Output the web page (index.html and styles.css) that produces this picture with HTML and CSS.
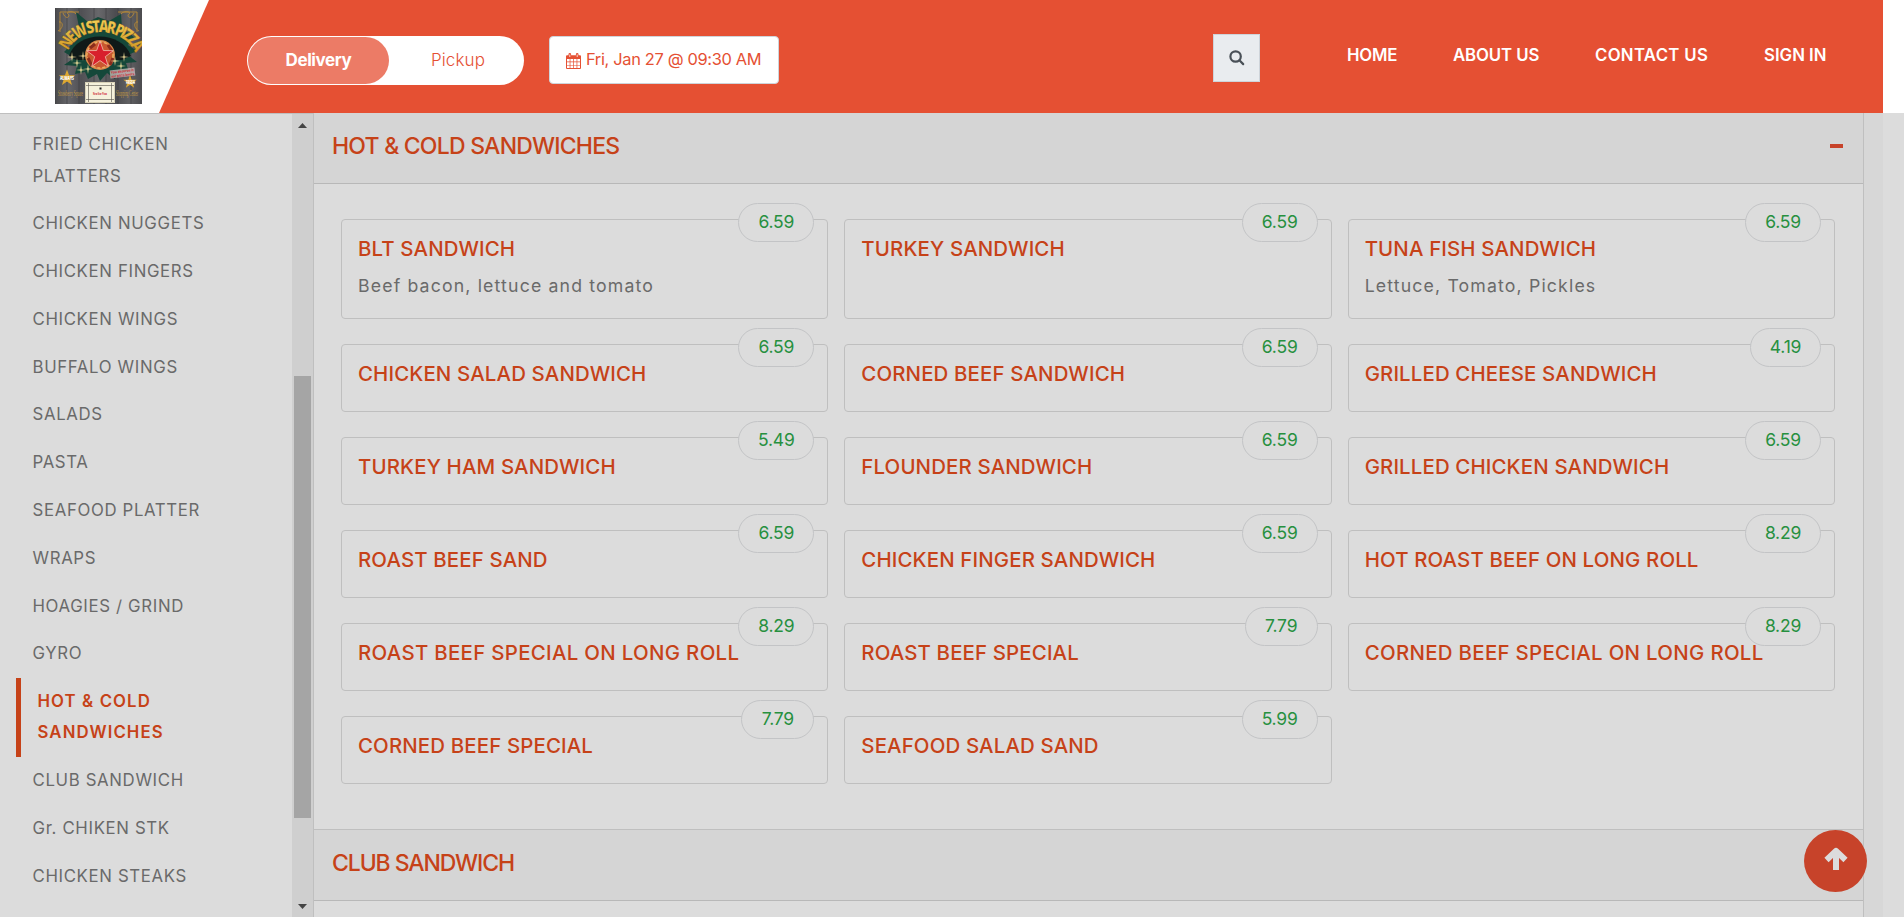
FILE: index.html
```html
<!DOCTYPE html>
<html lang="en">
<head>
<meta charset="utf-8">
<title>New Star Pizza - Menu</title>
<link rel="stylesheet" href="styles.css">
</head>
<body>
<header class="header">
  <div class="brand">
    <svg class="logo" width="87" height="96" viewBox="0 0 87 96">
      <defs>
        <linearGradient id="gold" x1="0" y1="0" x2="0" y2="1"><stop offset="0" stop-color="#f9d65c"/><stop offset="1" stop-color="#c98d1c"/></linearGradient>
        <linearGradient id="wood" x1="0" y1="0" x2="1" y2="0"><stop offset="0" stop-color="#4a4a4c"/><stop offset=".15" stop-color="#66666a"/><stop offset=".3" stop-color="#505054"/><stop offset=".5" stop-color="#68686b"/><stop offset=".7" stop-color="#4c4c50"/><stop offset=".85" stop-color="#616164"/><stop offset="1" stop-color="#4b4b4e"/></linearGradient>
        <path id="arch" d="M13 43C24 18 66 18 79 43"/>
        <path id="star" d="M0-10 2.4-3.2 9.5-3.1 3.8 1.2 5.9 8.1 0 4-5.9 8.1-3.8 1.2-9.5-3.1-2.4-3.2Z"/>
        <path id="glint" d="M0-5 .6-.6 5 0 .6.6 0 5-.6.6-5 0-.6-.6Z"/>
      </defs>
      <rect width="87" height="96" fill="url(#wood)"/>
      <path d="M0 0V96M12 0V96M24 0V96M39 0V96M51 0V96M63 0V96M76 0V96" stroke="#3b3b3e" stroke-width=".6"/>
      <path d="M21 4 33 14 43 9 54 13 66 6 67 20 79 29 73 37 82 43 73 47 82 54 71 55 74 64 63 62 60 71 52 65 45 73 42 66 33 71 30 64 20 66 22 58 9 57 19 50 9 44 17 36 16 27 25 24Z" fill="#15483a"/>
      <path d="M14 48C22 22 67 22 76 48L67 52H21Z" fill="#101918"/>
      <circle cx="45" cy="47" r="15" fill="#d9874a"/>
      <circle cx="45" cy="47" r="13" fill="#c9572f" stroke="#e9b060" stroke-width="1.4" stroke-dasharray="3 2"/>
      <path d="M35 40 40 36M53 37 57 43M33 50 37 58M55 57 58 50" stroke="#8c2c1c" stroke-width="3"/>
      <use href="#star" transform="translate(45 47) scale(1.4)" fill="#d8202c" stroke="#f2b7a8" stroke-width=".6"/>
      <text class="logo-title" fill="url(#gold)"><textPath href="#arch" textLength="80" lengthAdjust="spacingAndGlyphs">NEW STAR PIZZA</textPath></text>
      <g fill="#fbe7a0"><use href="#glint" x="17" y="49"/><use href="#glint" x="22" y="55"/><use href="#glint" x="28" y="48"/><use href="#glint" x="26" y="62"/><use href="#glint" x="33" y="61"/><use href="#glint" x="66" y="58"/><use href="#glint" x="69" y="49"/><use href="#glint" x="60" y="53"/></g>
      <g fill="none" stroke="#b98a35" stroke-width=".9"><path d="M3 23C9 20 8 13 4 14M5 24V4H24M8 5C11 13 16 8 13 6S18 2 21 6"/><path d="M84 23C78 20 79 13 83 14M82 24V4H63M79 5C76 13 71 8 74 6S69 2 66 6"/></g>
      <use href="#star" transform="translate(12 70) scale(.85)" fill="#dda832"/>
      <use href="#star" transform="translate(75 74) scale(.7)" fill="#dda832"/>
      <text class="logo-tag" x="5" y="72" textLength="14" lengthAdjust="spacingAndGlyphs">ALWAYS</text>
      <text class="logo-tag" x="71" y="76" textLength="9" lengthAdjust="spacingAndGlyphs">FRESH</text>
      <g transform="rotate(-7 67 65)"><rect x="55" y="61" width="25" height="8" fill="#d9c7c5" opacity=".7"/><text class="logo-small" x="56" y="64.500" textLength="23" lengthAdjust="spacingAndGlyphs">You deserve it</text><text class="logo-small" x="56" y="68.500" textLength="23" lengthAdjust="spacingAndGlyphs">our pizza lovers</text></g>
      <text class="logo-foot" x="3" y="88" textLength="25" lengthAdjust="spacingAndGlyphs">Strawberry Square</text>
      <text class="logo-foot" x="61" y="88" textLength="22" lengthAdjust="spacingAndGlyphs">Shopping Center</text>
      <rect x="30.500" y="74.500" width="29" height="20" fill="#f5f1dc" stroke="#d8d2b8"/>
      <path d="M33.500 75V94M56.500 75V94M31 77.500H59M31 91.500H59" stroke="#55524a" stroke-width=".6"/>
      <rect x="44.500" y="79.500" width="2" height="2" fill="#222"/>
      <text class="logo-small" x="38" y="87" textLength="14" lengthAdjust="spacingAndGlyphs">New Star Pizza</text>
    </svg>
  </div>
  <div class="mode"><span class="mode-on">Delivery</span><span class="mode-off">Pickup</span></div>
  <div class="when">
    <svg width="15" height="16" viewBox="0 0 15 16"><path fill="#e55033" fill-rule="evenodd" d="M1 2.200H2.500V1.300A1.300 1.300 0 0 1 5.100 1.300V2.200H9.900V1.300A1.300 1.300 0 0 1 12.500 1.300V2.200H14A1 1 0 0 1 15 3.200V15A1 1 0 0 1 14 16H1A1 1 0 0 1 0 15V3.200A1 1 0 0 1 1 2.200ZM1 6V8.600H3.700V6ZM4.400 6V8.600H7.200V6ZM7.900 6V8.600H10.600V6ZM11.300 6V8.600H14V6ZM1 9.300V11.900H3.700V9.300ZM4.400 9.300V11.900H7.200V9.300ZM7.900 9.300V11.900H10.600V9.300ZM11.300 9.300V11.900H14V9.300ZM1 12.600V15H3.700V12.600ZM4.400 12.600V15H7.200V12.600ZM7.900 12.600V15H10.600V12.600ZM11.300 12.600V15H14V12.600Z"/><path d="M3.800 1.500V4M11.200 1.500V4" stroke="#fff" stroke-width=".8"/></svg>
    <span>Fri, Jan 27 @ 09:30 AM</span>
  </div>
  <div class="search"><svg width="16" height="16" viewBox="0 0 16 16" fill="none" stroke="#495057" stroke-width="2.200"><circle cx="6.600" cy="6.500" r="5.200"/><path d="M10.400 10.300 14.200 14.100" stroke-linecap="round"/></svg></div>
  <nav class="nav"><a class="nav-home">HOME</a><a class="nav-about">ABOUT US</a><a class="nav-contact">CONTACT US</a><a class="nav-sign">SIGN IN</a></nav>
</header>
<main class="main">
  <aside class="side">
    <ul class="cats">
      <li>FRIED CHICKEN<br>PLATTERS</li>
      <li>CHICKEN NUGGETS</li>
      <li>CHICKEN FINGERS</li>
      <li>CHICKEN WINGS</li>
      <li>BUFFALO WINGS</li>
      <li>SALADS</li>
      <li>PASTA</li>
      <li>SEAFOOD PLATTER</li>
      <li>WRAPS</li>
      <li>HOAGIES / GRIND</li>
      <li>GYRO</li>
      <li class="current">HOT &amp; COLD<br>SANDWICHES</li>
      <li>CLUB SANDWICH</li>
      <li>Gr. CHIKEN STK</li>
      <li>CHICKEN STEAKS</li>
      <li>BEEF STEAKS</li>
    </ul>
    <div class="bar"><svg class="tri" width="9" height="5" viewBox="0 0 9 5"><path d="M0 5 4.500 0 9 5Z"/></svg><div class="thumb"></div><svg class="tri" width="9" height="5" viewBox="0 0 9 5"><path d="M0 0 4.500 5 9 0Z"/></svg></div>
  </aside>
  <section class="menu">
    <div class="section-head"><h2>HOT &amp; COLD SANDWICHES</h2><span class="minus"></span></div>
    <div class="grid">
      <article class="card"><h3>BLT SANDWICH</h3><p>Beef bacon, lettuce and tomato</p><span class="price">6.59</span></article>
      <article class="card"><h3>TURKEY SANDWICH</h3><span class="price">6.59</span></article>
      <article class="card"><h3>TUNA FISH SANDWICH</h3><p>Lettuce, Tomato, Pickles</p><span class="price">6.59</span></article>
      <article class="card"><h3>CHICKEN SALAD SANDWICH</h3><span class="price">6.59</span></article>
      <article class="card"><h3>CORNED BEEF SANDWICH</h3><span class="price">6.59</span></article>
      <article class="card"><h3>GRILLED CHEESE SANDWICH</h3><span class="price narrow">4.19</span></article>
      <article class="card"><h3>TURKEY HAM SANDWICH</h3><span class="price">5.49</span></article>
      <article class="card"><h3>FLOUNDER SANDWICH</h3><span class="price">6.59</span></article>
      <article class="card"><h3>GRILLED CHICKEN SANDWICH</h3><span class="price">6.59</span></article>
      <article class="card"><h3>ROAST BEEF SAND</h3><span class="price">6.59</span></article>
      <article class="card"><h3>CHICKEN FINGER SANDWICH</h3><span class="price">6.59</span></article>
      <article class="card"><h3>HOT ROAST BEEF ON LONG ROLL</h3><span class="price">8.29</span></article>
      <article class="card"><h3 class="long">ROAST BEEF SPECIAL ON LONG ROLL</h3><span class="price">8.29</span></article>
      <article class="card"><h3>ROAST BEEF SPECIAL</h3><span class="price mid">7.79</span></article>
      <article class="card"><h3 class="long">CORNED BEEF SPECIAL ON LONG ROLL</h3><span class="price">8.29</span></article>
      <article class="card"><h3>CORNED BEEF SPECIAL</h3><span class="price mid">7.79</span></article>
      <article class="card"><h3>SEAFOOD SALAD SAND</h3><span class="price">5.99</span></article>
    </div>
    <div class="section-head next"><h2>CLUB SANDWICH</h2></div>
  </section>
  <div class="gutter"></div>
</main>
<a class="to-top"><svg width="26" height="24" viewBox="0 0 26 24"><path d="M13 23V4M3.500 13 13 3.800 22.500 13" fill="none" stroke="#dcdcdc" stroke-width="6" stroke-linejoin="round"/></svg></a>
</body>
</html>
```
FILE: styles.css
```css
* { box-sizing: border-box; }
body {
  margin: 0;
  height: 917px;
  overflow: hidden;
  display: flex;
  flex-direction: column;
  background: #dcdcdc;
  font-family: Inter, "Liberation Sans", sans-serif;
}
h2, h3, p, ul { margin: 0; padding: 0; }

/* header */
.header {
  flex: none;
  height: 113px;
  display: flex;
  align-items: flex-start;
  background: linear-gradient(to right, #e55033 1883px, #fff 1883px);
}
.brand {
  width: 209px;
  height: 113px;
  padding: 8px 0 0 55px;
  background: #fff;
  clip-path: polygon(0 0, 100% 0, 159px 100%, 0 100%);
}
.logo { display: block; }
.logo-title { font: 800 17px "Open Sans", sans-serif; letter-spacing: -3.200px; stroke: #4c3108; stroke-width: .2; }
.logo-tag { font: 900 5px "Open Sans", sans-serif; fill: #fff; }
.logo-small { font: 700 3.500px "Open Sans", sans-serif; fill: #cf2430; }
.logo-foot { font: 9px "Liberation Serif", serif; fill: #c49a42; }
.mode {
  width: 277px;
  height: 49px;
  margin: 36px 0 0 38px;
  padding: 1px;
  display: flex;
  border-radius: 25px;
  background: #fff;
  font-size: 17px;
  line-height: 46px;
  text-align: center;
}
.mode-on {
  width: 141px;
  border-radius: 24px;
  background: #ec7b66;
  color: #fff;
  font-weight: 650;
  letter-spacing: -.4px;
}
.mode-off { flex: 1; padding-left: 4px; color: #e55033; font-weight: 300; letter-spacing: .1px; }
.when {
  width: 230px;
  height: 48px;
  margin: 36px 0 0 25px;
  padding-left: 16px;
  display: flex;
  align-items: center;
  gap: 5px;
  border: 1px solid #ced4da;
  border-radius: 4px;
  background: #fff;
  color: #e55033;
  font-size: 16.4px;
  letter-spacing: -.33px;
  white-space: nowrap;
}
.when svg { margin-top: 2px; }
.when span { margin-top: -2px; }
.search {
  width: 47px;
  height: 48px;
  margin: 34px 0 0 434px;
  display: flex;
  align-items: center;
  justify-content: center;
  border: 1px solid #ced4da;
  background: #e9ecef;
}
.nav {
  display: flex;
  margin: 43px 0 0 87px;
  gap: 55px;
  color: #fff;
  font-size: 16.800px;
  font-weight: 580;
  line-height: 24px;
  white-space: nowrap;
}
.nav-home { width: 51px; letter-spacing: -.2px; }
.nav-about { width: 87px; letter-spacing: -.1px; }
.nav-contact { width: 114px; letter-spacing: .3px; }
.nav-sign { width: 64px; }

/* body */
.main { flex: 1; min-height: 0; display: flex; }
.side {
  width: 313px;
  height: 804px;
  display: flex;
  overflow: hidden;
  border-top: 1px solid #bfbfbf;
}
.cats {
  width: 292px;
  padding: 7px 0 0 16px;
  list-style: none;
  color: #6a6a6a;
  font-size: 16.8px;
  line-height: 31.2px;
  letter-spacing: .65px;
}
.cats li { padding: 8.3px 0 8.3px 16.500px; }
.cats .current {
  border-left: 5px solid #c64218;
  color: #c64218;
  font-weight: 600;
  letter-spacing: 1.1px;
}
.bar {
  width: 21px;
  display: flex;
  flex-direction: column;
  align-items: center;
  padding: 9px 2px 8px 0;
  background: #cfcfcf;
}
.thumb { width: 17px; height: 442px; margin: 248px 0 auto 1px; background: #a5a5a5; }
.tri { flex: none; fill: #444; margin-left: 2px; }

.menu { width: 1551px; border: solid #bfbfbf; border-width: 0 1px; }
.section-head {
  height: 71px;
  padding: 0 20px 0 18px;
  display: flex;
  align-items: center;
  justify-content: space-between;
  border-bottom: 1px solid #b8b8b8;
  background: #d5d5d5;
  color: #c64218;
}
.section-head h2 {
  margin-top: -4px;
  font-size: 23px;
  font-weight: 520;
  letter-spacing: -.77px;
  line-height: 30px;
}
.minus { width: 13px; height: 4px; margin-top: -4px; background: #c7432a; }
.next { height: 72px; border-top: 1px solid #bfbfbf; }
.next h2 { letter-spacing: -1.1px; }
.grid {
  display: grid;
  grid-template-columns: repeat(3, 1fr);
  grid-template-rows: 100px repeat(5, 68px);
  gap: 25px 16px;
  height: 645px;
  padding: 35px 28px 0 27px;
}
.card {
  position: relative;
  padding: 14px 16px 0;
  border: 1px solid #bfbfbf;
  border-radius: 4px;
}
.card h3 {
  color: #c64218;
  font-size: 20.4px;
  font-weight: 520;
  line-height: 30px;
  letter-spacing: .15px;
  white-space: nowrap;
}
.card .long { letter-spacing: .32px; }
.card p {
  margin-top: 8px;
  color: #6a6a6a;
  font-size: 17.700px;
  line-height: 28px;
  letter-spacing: 1.15px;
}
.price {
  position: absolute;
  top: -17.500px;
  right: 13px;
  width: 76px;
  height: 39px;
  border: 1px solid #c3c4c6;
  border-radius: 20px;
  background: #dcdcdc;
  color: #27903f;
  font-size: 17.500px;
  letter-spacing: -.2px;
  line-height: 35px;
  text-align: center;
}
.narrow { width: 71px; }
.mid { width: 73px; }
.card h3 { position: relative; z-index: 1; }
.gutter { width: 19px; background: #d7d7d7; }

.to-top {
  position: fixed;
  left: 1804px;
  top: 830px;
  width: 63px;
  height: 62px;
  display: flex;
  align-items: center;
  justify-content: center;
  border-radius: 50%;
  background: #c7432a;
}
.to-top svg { margin-top: -5px; }
```
